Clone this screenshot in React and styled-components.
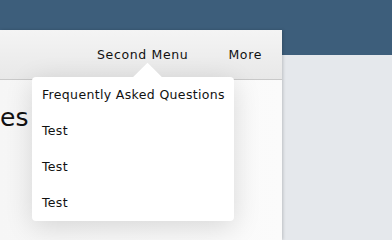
import React from "react"
import styled, { createGlobalStyle } from "styled-components"

const GlobalStyle = createGlobalStyle`
  html, body {
    margin: 0;
    padding: 0;
    height: 100%;
    overflow: hidden;
  }

  body {
    background: #e5e8ec;
    font-family: "DejaVu Sans", "Liberation Sans", sans-serif;
    color: #111;
  }
`

const Page = styled.div`
  display: flex;
  flex-direction: column;
  height: 240px;
`

const TopBand = styled.div`
  height: 55px;
  flex: none;
  background: #3d5e7b;
`

const Panel = styled.div`
  position: relative;
  width: 282px;
  flex: 1;
  margin-top: -25px;
  display: flex;
  flex-direction: column;
  background: linear-gradient(90deg, #f6f6f6 0%, #fbfbfb 100%);
  box-shadow: 1px 0 3px rgba(0, 0, 0, 0.18);
`

const Header = styled.nav`
  height: 50px;
  flex: none;
  display: flex;
  align-items: center;
  justify-content: flex-end;
  gap: 40px;
  padding-right: 20px;
  border-bottom: 1px solid #c9c9c9;
  background: linear-gradient(180deg, #f4f4f4 0%, #e8e8e8 100%);
  box-sizing: border-box;
`

const NavItem = styled.div`
  position: relative;
  font-size: 12.5px;
  letter-spacing: 0.65px;
  line-height: 16px;
`

const Body = styled.div`
  flex: 1;
  padding-top: 22px;
`

const Heading = styled.h1`
  margin: 0;
  font-size: 25px;
  font-weight: normal;
  line-height: 32px;
`

const Dropdown = styled.ul`
  position: absolute;
  top: 30px;
  left: -65px;
  width: 202px;
  margin: 0;
  padding: 0;
  list-style: none;
  background: #fff;
  border-radius: 4px;
  box-shadow: 0 6px 28px rgba(0, 0, 0, 0.14);

  &::before {
    content: "";
    position: absolute;
    top: -10px;
    left: 105px;
    width: 21px;
    height: 21px;
    background: #fff;
    transform: rotate(45deg);
  }
`

const DropdownItem = styled.li`
  position: relative;
  height: 36px;
  display: flex;
  align-items: center;
  padding-left: 10px;
  font-size: 12.5px;
  letter-spacing: 0.35px;
`

const items = ["Frequently Asked Questions", "Test", "Test", "Test"]

const App = () => (
  <>
    <GlobalStyle />
    <Page>
      <TopBand />
      <Panel>
        <Header>
          <NavItem>
            Second Menu
            <Dropdown>
              {items.map((item, i) => (
                <DropdownItem key={i}>{item}</DropdownItem>
              ))}
            </Dropdown>
          </NavItem>
          <NavItem>More</NavItem>
        </Header>
        <Body>
          <Heading>es</Heading>
        </Body>
      </Panel>
    </Page>
  </>
)

export default App
